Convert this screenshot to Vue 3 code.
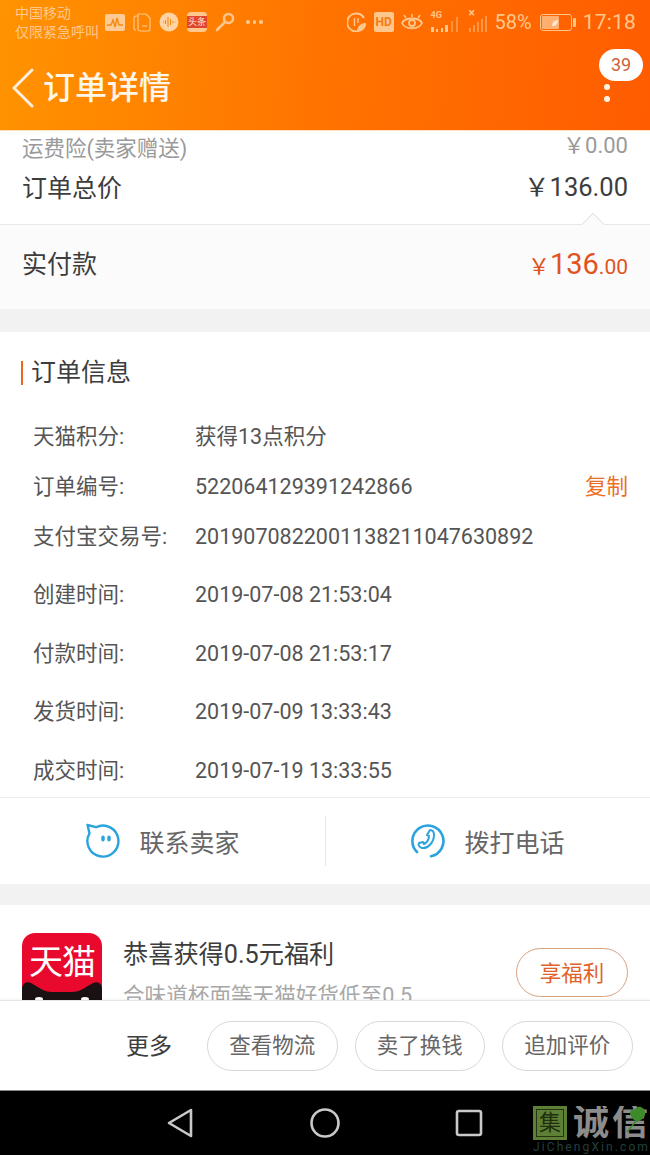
<script setup>
const infos = [
  { label: '天猫积分:', value: '获得13点积分', h: 50 },
  { label: '订单编号:', value: '522064129391242866', h: 50, copy: true },
  { label: '支付宝交易号:', value: '2019070822001138211047630892', h: 58 },
  { label: '创建时间:', value: '2019-07-08 21:53:04', h: 58.500 },
  { label: '付款时间:', value: '2019-07-08 21:53:17', h: 58.500 },
  { label: '发货时间:', value: '2019-07-09 13:33:43', h: 58.500 },
  { label: '成交时间:', value: '2019-07-19 13:33:55', h: 30 },
]
</script>

<template>
  <div class="page">
    <header class="head">
      <div class="status">
        <div class="carrier"><span>中国移动</span><span>仅限紧急呼叫</span></div>
        <div class="notif">
          <svg width="20" height="17" viewBox="0 0 20 17"><rect width="20" height="17" rx="2" fill="#ffcb94"/><path d="M2 11h4l2-5 2 7 2-9 2 7h4" fill="none" stroke="#f58a12" stroke-width="1.400"/></svg>
          <svg width="18" height="20" viewBox="0 0 18 20" fill="none" stroke="#ffc78c" stroke-width="1.200"><path d="M5 2h8l4 4v11a2 2 0 0 1-2 2H7a2 2 0 0 1-2-2z"/><path d="M5 4H3a2 2 0 0 0-2 2v10a2 2 0 0 0 2 2"/><path d="M9 14h5"/></svg>
          <svg width="20" height="20" viewBox="0 0 20 20"><circle cx="10" cy="10" r="9.500" fill="#ffd3a3"/><path d="M4 10h1M6.500 8v4M9 5v10M11.500 7v6M14 9v2M16 10h.5" stroke="#f58a12" stroke-width="1.100"/></svg>
          <span class="toutiao"><span>头条</span></span>
          <svg width="20" height="20" viewBox="0 0 20 20" fill="none" stroke="#ffc78c" stroke-width="2.600"><circle cx="13.500" cy="6.500" r="4.500"/><path d="M10 10l-8 8" stroke-linecap="round"/></svg>
          <span class="more-dots"><i></i><i></i><i></i></span>
        </div>
        <div class="sys">
          <svg width="20" height="20" viewBox="0 0 20 20" fill="none" stroke="#ffc78c" stroke-width="2"><path d="M17 6a9 9 0 1 0 1 6"/><path d="M7.500 6v8M11 6v5" stroke-width="1.500"/><path d="M10 19c0-5 4-8 9-8 0 5-3 8-9 8z" fill="#ffc78c" stroke="none"/></svg>
          <span class="hd">HD</span>
          <svg width="22" height="17" viewBox="0 0 22 17" fill="none" stroke="#ffc78c" stroke-width="1.800"><path d="M1 9c3-6 17-6 20 0-3 7-17 7-20 0z"/><circle cx="11" cy="9" r="3"/><path d="M3 1l2 3M11 0v3M19 1l-2 3" stroke-width="1.500"/></svg>
          <div class="signal">
            <span class="g4">4G</span>
            <svg width="32" height="19" viewBox="0 0 32 19"><g fill="#ffc78c"><rect x="1" y="12" width="3" height="5"/><rect x="6" y="14" width="2" height="3"/><rect x="11" y="13" width="2" height="4"/><rect x="15" y="10" width="3" height="7"/></g><g fill="#ffc78c" opacity=".45"><rect x="21" y="6" width="2" height="11"/><rect x="26" y="2" width="2" height="15"/></g></svg>
          </div>
          <div class="signal two">
            <span class="x">×</span>
            <svg width="22" height="19" viewBox="0 0 22 19"><g fill="#ffc78c" opacity=".5"><rect x="1" y="13" width="2" height="4"/><rect x="5" y="10" width="2" height="7"/><rect x="9" y="7" width="2" height="10"/><rect x="13" y="4" width="2" height="13"/><rect x="17" y="1" width="2" height="16"/></g></svg>
          </div>
          <span class="pct">58%</span>
          <svg class="batt" width="36" height="17" viewBox="0 0 36 17"><rect x=".5" y=".5" width="31" height="16" rx="2.500" fill="none" stroke="#ffc78c"/><rect x="2" y="2" width="17" height="13" rx="1" fill="#ffb070"/><path d="M12 12c0-4 3-6 6-6 0 4-2 6-6 6z" fill="#ffe6cc"/><rect x="33" y="4" width="3" height="9" rx="1" fill="#ffc78c"/></svg>
          <span class="clock">17:18</span>
        </div>
      </div>
      <div class="nav">
        <svg class="back" width="24" height="40" viewBox="0 0 24 40"><path d="M21 2L3 20l18 18" fill="none" stroke="#ffeedd" stroke-width="3" stroke-linecap="round" stroke-linejoin="round"/></svg>
        <h1>订单详情</h1>
        <div class="menu"><span class="badge">39</span><i></i><i></i></div>
      </div>
    </header>

    <main class="scroll">
      <section class="price">
        <div class="row minor"><span>运费险(卖家赠送)</span><span class="num">￥0.00</span></div>
        <div class="row total"><span>订单总价</span><span class="num">￥136.00</span></div>
      </section>
      <section class="paid">
        <span class="caret"></span>
        <span class="paid-label">实付款</span>
        <span class="paid-val"><small>￥</small><b>136</b><small class="cents">.00</small></span>
      </section>

      <section class="info">
        <h2>订单信息</h2>
        <div class="info-list">
          <div v-for="r in infos" :key="r.label" class="info-row" :style="{ height: r.h + 'px' }">
            <span class="k">{{ r.label }}</span>
            <span class="v">{{ r.value }}</span>
            <span v-if="r.copy" class="copy">复制</span>
          </div>
        </div>
      </section>

      <section class="contact">
        <div class="c-btn">
          <svg width="36" height="36" viewBox="0 0 36 36" fill="none"><path d="M11 4.200A15.500 15.500 0 1 1 4.500 10.300L2.500 2z" stroke="#2ba3dd" stroke-width="2.400" stroke-linejoin="round"/><ellipse cx="18" cy="15.500" rx="1.800" ry="3" fill="#2ba3dd"/><ellipse cx="24" cy="15.500" rx="1.800" ry="3" fill="#2ba3dd"/></svg>
          <span>联系卖家</span>
        </div>
        <div class="c-btn">
          <svg width="36" height="36" viewBox="0 0 36 36" fill="none" stroke="#2ba3dd"><path d="M7 29A15.500 15.500 0 1 1 21 33.200" stroke-width="2.600" stroke-linecap="round"/><path d="M20 7c3 0 4 2 4 5 0 7-6 14-12 13-3-1-4-3-3-5l4-1 1 2c3-1 5-5 5-8l-2-1z" stroke-width="2" stroke-linejoin="round"/></svg>
          <span>拨打电话</span>
        </div>
      </section>

      <section class="promo">
        <div class="logo">
          <span>天猫</span>
          <svg class="cat" width="80" height="31" viewBox="0 49 80 31"><path d="M0 80V56C0 50 5 48 9 50 16 54 22 59 30 59H50C58 59 64 54 71 50 75 48 80 50 80 56V80z" fill="#1a1212"/><ellipse cx="17" cy="66" rx="4" ry="2" fill="#fff"/><ellipse cx="63" cy="66" rx="4" ry="2" fill="#fff"/></svg>
        </div>
        <div class="p-text">
          <div class="p-title">恭喜获得0.5元福利</div>
          <div class="p-sub">合味道杯面等天猫好货低至0.5</div>
        </div>
        <span class="p-btn">享福利</span>
      </section>
    </main>

    <footer class="actions">
      <span class="more">更多</span>
      <span class="pill">查看物流</span>
      <span class="pill">卖了换钱</span>
      <span class="pill">追加评价</span>
    </footer>

    <div class="sysnav">
      <svg width="28" height="32" viewBox="0 0 28 32"><path d="M25 3L3 16l22 13z" fill="none" stroke="#c9c9c9" stroke-width="2.600" stroke-linejoin="round"/></svg>
      <svg width="32" height="32" viewBox="0 0 32 32"><circle cx="16" cy="16" r="13.500" fill="none" stroke="#c9c9c9" stroke-width="2.600"/></svg>
      <svg width="28" height="28" viewBox="0 0 28 28"><rect x="2" y="2" width="24" height="24" rx="2" fill="none" stroke="#c9c9c9" stroke-width="2.600"/></svg>
      <div class="mark">
        <div class="mark-top">
          <span class="seal"><span>集</span></span>
          <span class="mark-name">诚信</span>
          <svg class="leaf" width="24" height="32" viewBox="0 0 24 32"><path d="M12 18C2 12 4 4 10 6c1-5 9-4 10 2 1 5-3 8-8 10z" fill="#3d8a2a"/><path d="M12 16L2 28" stroke="#3d8a2a" stroke-width="1.500"/></svg>
        </div>
        <div class="mark-url">JiChengXin.com</div>
      </div>
    </div>
  </div>
</template>

<style>
html, body { margin: 0; background: #fff; }
</style>

<style scoped>
* { box-sizing: border-box; }
.page {
  width: 650px;
  height: 1155px;
  overflow: hidden;
  display: flex;
  flex-direction: column;
  font-family: Roboto, "Noto Sans CJK SC", sans-serif;
  background: #fff;
  color: #3d3d3d;
}
.head {
  height: 130px;
  flex: none;
  background: linear-gradient(95deg, #ff9300 0%, #ff7300 50%, #ff5c00 100%);
  display: flex;
  flex-direction: column;
}
.status {
  height: 44px;
  display: flex;
  align-items: center;
  padding: 0 14px 0 15px;
  color: #ffc78c;
}
.carrier {
  width: 85px;
  display: flex;
  flex-direction: column;
  font-size: 14px;
  line-height: 19px;
  margin-top: 1px;
  white-space: nowrap;
}
.notif { display: flex; align-items: center; gap: 8px; margin-left: 5px; }
.toutiao {
  width: 20px; height: 20px; border-radius: 4px; background: #ffc78c;
  display: flex; align-items: center;
}
.toutiao span {
  width: 20px; height: 12px; background: #e2452f; color: #ffe9d6;
  font-size: 9px; line-height: 12px; text-align: center; white-space: nowrap;
}
.more-dots { display: flex; gap: 3px; margin-left: 3px; }
.more-dots i { width: 3.500px; height: 3.500px; border-radius: 50%; background: #ffc78c; }
.sys { margin-left: auto; display: flex; align-items: center; gap: 7px; }
.hd {
  width: 20px; height: 20px; border-radius: 2px; background: #ffc78c; color: #f57a10;
  font-size: 12px; font-weight: 700; line-height: 20px; text-align: center;
}
.signal { position: relative; width: 32px; height: 24px; display: flex; align-items: flex-end; margin-right: -1px; }
.signal.two { width: 22px; margin: 0 -2px 0 0; }
.g4 { position: absolute; left: 1px; top: 0; font-size: 9px; line-height: 10px; font-weight: 700; }
.x { position: absolute; left: 1px; top: -3px; font-size: 12px; line-height: 12px; font-weight: 700; }
.pct { font-size: 20px; line-height: 24px; }
.batt { margin-left: 1px; }
.clock { font-size: 21px; line-height: 24px; letter-spacing: .2px; }

.nav { position: relative; flex: 1; display: flex; align-items: center; padding: 0 0 0 11px; }
.back { margin-top: 1px; }
.nav h1 { margin: 2px 0 0 8px; font-size: 32px; font-weight: 500; line-height: 40px; color: #fff6ea; }
.menu { position: absolute; left: 599px; top: 5px; width: 44px; display: flex; flex-direction: column; align-items: center; }
.menu .badge {
  width: 44px; height: 32px; border-radius: 16px; background: #fff; color: #c9623a;
  font-size: 18px; line-height: 32px; text-align: center;
}
.menu i { width: 6px; height: 6px; border-radius: 50%; background: #fff3e6; margin: 3px 28px 0 0; }
.menu i + i { margin-top: 6px; }

.scroll { height: 870px; flex: none; overflow: hidden; background: #f2f2f2; }
.price { height: 94px; background: #fff; padding: 0 22px; box-shadow: inset 0 1px 0 #ffe0bd; }
.row { display: flex; justify-content: space-between; align-items: center; }
.minor { height: 36px; padding-top: 1px; font-size: 21.500px; color: #9a9a9a; line-height: 36px; }
.minor .num { font-size: 22px; transform: translateY(-3px); }
.total { height: 44px; margin-top: 1px; font-size: 25px; color: #3d3d3d; line-height: 44px; }
.total .num { font-size: 25.500px; transform: translateY(-2px); }
.paid {
  position: relative;
  height: 85px;
  background: #fbfbfb;
  border-top: 1px solid #e8e8e8;
  display: flex;
  align-items: center;
  justify-content: space-between;
  padding: 0 22px 10px;
}
.caret {
  position: absolute; right: 49px; top: -9px; width: 16px; height: 16px;
  background: #fbfbfb; border-left: 1px solid #e4e4e4; border-top: 1px solid #e4e4e4;
  transform: rotate(45deg);
}
.paid-label { font-size: 25px; color: #3d3d3d; }
.paid-val { color: #e0541d; display: flex; align-items: baseline; transform: translateY(2px); }
.paid-val b { font-weight: 400; font-size: 29px; }
.paid-val small { font-size: 22px; }
.paid-val .cents { font-size: 21px; }

.info { margin-top: 23px; height: 465px; background: #fff; padding-top: 29px; overflow: hidden; }
.info h2 {
  margin: 0 0 0 21px;
  height: 24px;
  padding-left: 8px;
  border-left: 2.500px solid #f0651e;
  font-size: 25px;
  font-weight: 400;
  line-height: 24px;
  color: #3d3d3d;
}
.info-list { margin-top: 37px; padding: 0 22px 0 33px; }
.info-row { display: flex; align-items: flex-start; font-size: 21.500px; line-height: 30px; }
.k { width: 162px; flex: none; color: #555; }
.v { color: #555; white-space: nowrap; }
.copy { margin-left: auto; color: #ec6f23; }

.contact { height: 87px; background: #fff; border-top: 1px solid #ececec; display: grid; grid-template-columns: 1fr 1fr; align-items: center; position: relative; }
.contact::after { content: ""; position: absolute; left: 325px; top: 18px; height: 50px; width: 1px; background: #eaeaea; }
.c-btn { display: flex; align-items: center; justify-content: center; gap: 18px; font-size: 25px; color: #666; }
.c-btn span { line-height: 36px; padding-top: 6px; }

.promo { margin-top: 21px; height: 140px; background: #fff; display: flex; padding: 28px 22px 0; }
.logo {
  width: 80px; height: 80px; border-radius: 13px; background: #e8092c; position: relative; overflow: hidden;
  color: #fff; text-align: center; flex: none;
}
.logo span { display: block; font-size: 34px; line-height: 38px; margin-top: 10px; letter-spacing: -1px; white-space: nowrap; }
.cat { position: absolute; left: 0; top: 49px; }
.p-text { margin-left: 21px; flex: 1; min-width: 0; }
.p-title { font-size: 25.200px; line-height: 34px; color: #3d3d3d; margin-top: 5px; }
.p-sub { font-size: 21.600px; line-height: 28px; color: #a8a8a8; margin-top: 10px; white-space: nowrap; }
.p-btn {
  width: 112px; height: 49px; border: 1px solid #d9a07e; border-radius: 25px; color: #e0622a;
  font-size: 21.500px; line-height: 50px; text-align: center; margin-top: 15px; flex: none; background: #fff;
}

.actions {
  height: 90px;
  flex: none;
  background: #fff;
  border-top: 1px solid #e6e6e6;
  position: relative;
  display: flex;
  align-items: center;
  gap: 17px;
  padding: 0 17px 0 126px;
  box-shadow: 0 -1px 2px rgba(0,0,0,.05);
}
.more { font-size: 23px; color: #3d3d3d; margin: 0 18px 3px 0; white-space: nowrap; }
.pill {
  width: 130.500px; height: 50px; border: 1px solid #d8d8d8; border-radius: 25px; color: #666;
  font-size: 21.500px; line-height: 48px; text-align: center; flex: none; white-space: nowrap;
}
.sysnav {
  position: relative;
  flex: 1;
  background: #000;
  border-top: 1px solid #888;
  display: flex;
  align-items: center;
  padding-left: 166px;
  gap: 114.500px;
}
.mark { position: absolute; left: 533px; top: 15px; width: 117px; height: 49px; overflow: hidden; }
.mark-top { display: flex; align-items: center; height: 34px; position: relative; }
.seal { width: 34px; height: 34px; background: #5d7f36; display: flex; align-items: center; justify-content: center; flex: none; }
.seal span { width: 28px; height: 28px; border: 1px solid #26340f; font-size: 22px; line-height: 26px; text-align: center; color: #20300d; }
.mark-name { font-size: 36px; line-height: 34px; color: #8c8c8c; font-weight: 700; margin-left: 6px; letter-spacing: 3px; white-space: nowrap; }
.leaf { position: absolute; left: 92px; top: -2px; }
.mark-url { font-size: 12px; line-height: 14px; color: #24403f; letter-spacing: 2.100px; white-space: nowrap; }
</style>
